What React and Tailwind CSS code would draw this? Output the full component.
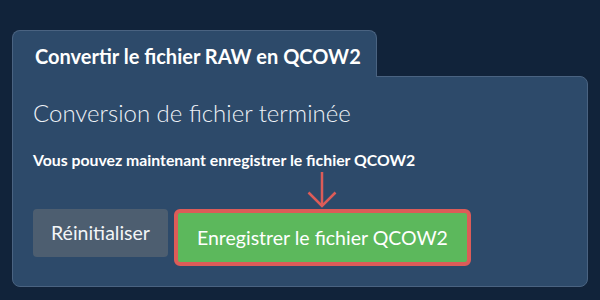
import React from "react";

const ArrowDown = () => (
  <svg width="30" height="37" viewBox="0 0 30 37" fill="none" stroke="#dc5c58" strokeWidth="2.5">
    <path d="M15 0 V34" />
    <path d="M1.5 20.5 L15 34 L28.5 20.5" />
  </svg>
);

const App = () => {
  return (
    <div className="w-[600px] h-[300px] bg-[#11233a] px-3 pt-[30px] font-['Lato',sans-serif] overflow-hidden">
      <div className="flex flex-col">
        <div className="relative z-10 -mb-px w-[365px] h-[47px] bg-[#2d4a6a] border border-b-0 border-[#4a6381] rounded-t-lg flex items-center pl-[22px] pt-[4px]">
          <span className="text-white font-bold text-[20px]">
            Convertir le fichier RAW en QCOW2
          </span>
        </div>
        <div className="h-[211px] bg-[#2d4a6a] border border-[#4a6381] rounded-b-lg rounded-tr-lg px-[20px] pt-[20px]">
          <h2 className="text-[#eef2f7] font-light text-[24px] leading-[32px]">
            Conversion de fichier terminée
          </h2>
          <p className="mt-[20px] text-white font-bold text-[15.8px] leading-[22px]">
            Vous pouvez maintenant enregistrer le fichier QCOW2
          </p>
          <div className="flex items-start gap-[6px] mt-[1px]">
            <div className="flex flex-col">
              <div className="h-[37px]" />
              <button className="h-[48px] px-[18px] bg-[#4d5e70] rounded text-[#f3f5f7] text-[19.5px]">
                Réinitialiser
              </button>
            </div>
            <div className="flex flex-col items-center">
              <div className="h-[37px] flex items-start">
                <ArrowDown />
              </div>
              <button className="h-[57px] px-[19px] bg-[#5cb85c] border-[4px] border-[#dc5c58] rounded-md text-white text-[19.5px]">
                Enregistrer le fichier QCOW2
              </button>
            </div>
          </div>
        </div>
      </div>
    </div>
  );
};

export default App;
